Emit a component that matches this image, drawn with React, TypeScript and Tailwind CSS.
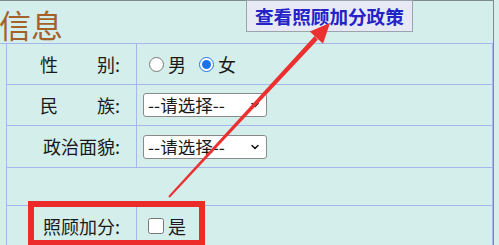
import { ChevronDown } from 'lucide-react';

const cjk = { fontFamily: '"Noto Sans CJK SC", "Microsoft YaHei", sans-serif' };

function FakeSelect() {
  return (
    <div className="relative w-[124px] h-[24px]">
      <select
        defaultValue=""
        className="appearance-none w-full h-full bg-white border border-[#8a8a8a] rounded-[3px] pl-[4px] text-[17.5px] leading-none text-[#1a1a1a] outline-none"
        style={cjk}
      >
        <option value="">--请选择--</option>
      </select>
      <ChevronDown
        className="absolute right-[6px] top-[6px] w-[12px] h-[12px] text-[#111] pointer-events-none"
        strokeWidth={3}
      />
    </div>
  );
}

function Label({ children }: { children: React.ReactNode }) {
  return (
    <div className="flex items-center justify-end pr-[16px] border-r border-[#a9b6ee] text-[18px] text-[#1a1a1a]">
      {children}
    </div>
  );
}

export default function App() {
  return (
    <div className="relative w-[499px] h-[245px] overflow-hidden bg-[#d7eeec]" style={cjk}>
      <div className="w-[494px] h-full border-t border-r border-[#7e8c8c] bg-[#d3eeeb]">
        {/* header */}
        <div className="flex h-[43px] border-b border-[#a9b6ee] w-[493px]">
          <div className="w-[247px] shrink-0 -ml-[1px] pt-[4px] text-[32px] leading-[38px] text-[#a4612c]">
            信息
          </div>
          <button className="h-[32px] -mt-[1px] px-[8px] border border-[#9ba3ad] bg-[#e7eaf5] text-[18.6px] font-bold text-[#2323c8] leading-none">
            查看照顾加分政策
          </button>
        </div>

        {/* form table */}
        <div className="ml-[6px] w-[487px] border-l border-r border-[#a9b6ee]">
          <div className="grid grid-cols-[130px_1fr] h-[41px] border-b border-[#a9b6ee]">
            <Label>
              <div className="flex justify-between w-[80px]">
                <span>性</span>
                <span>别:</span>
              </div>
            </Label>
            <div className="flex items-center pl-[12px] text-[18px] text-[#1a1a1a]">
              <label className="flex items-center">
                <input type="radio" name="sex" className="w-[15px] h-[15px] m-0" />
                <span className="ml-[4px]">男</span>
              </label>
              <label className="flex items-center ml-[13px]">
                <input type="radio" name="sex" defaultChecked className="w-[15px] h-[15px] m-0 accent-[#1a73e8]" />
                <span className="ml-[4px]">女</span>
              </label>
            </div>
          </div>

          <div className="grid grid-cols-[130px_1fr] h-[41px] border-b border-[#a9b6ee]">
            <Label>
              <div className="flex justify-between w-[80px]">
                <span>民</span>
                <span>族:</span>
              </div>
            </Label>
            <div className="flex items-center pl-[6px]">
              <FakeSelect />
            </div>
          </div>

          <div className="grid grid-cols-[130px_1fr] h-[42px] border-b border-[#a9b6ee]">
            <Label>政治面貌:</Label>
            <div className="flex items-center pl-[6px]">
              <FakeSelect />
            </div>
          </div>

          <div className="h-[38px] border-b border-[#a9b6ee]" />

          <div className="grid grid-cols-[130px_1fr] h-[40px]">
            <Label>照顾加分:</Label>
            <label className="flex items-center pl-[11px] text-[18px] text-[#1a1a1a]">
              <input type="checkbox" className="w-[16px] h-[16px] m-0" />
              <span className="ml-[4px]">是</span>
            </label>
          </div>
        </div>
      </div>

      {/* annotation: red box */}
      <div className="absolute left-[28px] top-[201px] w-[177px] h-[45px] border-[6px] border-[#ec2b2b] pointer-events-none" />

      {/* annotation: arrow */}
      <svg className="absolute inset-0 pointer-events-none" width="499" height="245" viewBox="0 0 499 245">
        <polygon points="169.7,197.7 168.3,196.3 314.6,36 317.8,39.7" fill="#ec3030" />
        <polygon points="330,23 309.8,31.6 323,43.8" fill="#ec3030" />
      </svg>
    </div>
  );
}
